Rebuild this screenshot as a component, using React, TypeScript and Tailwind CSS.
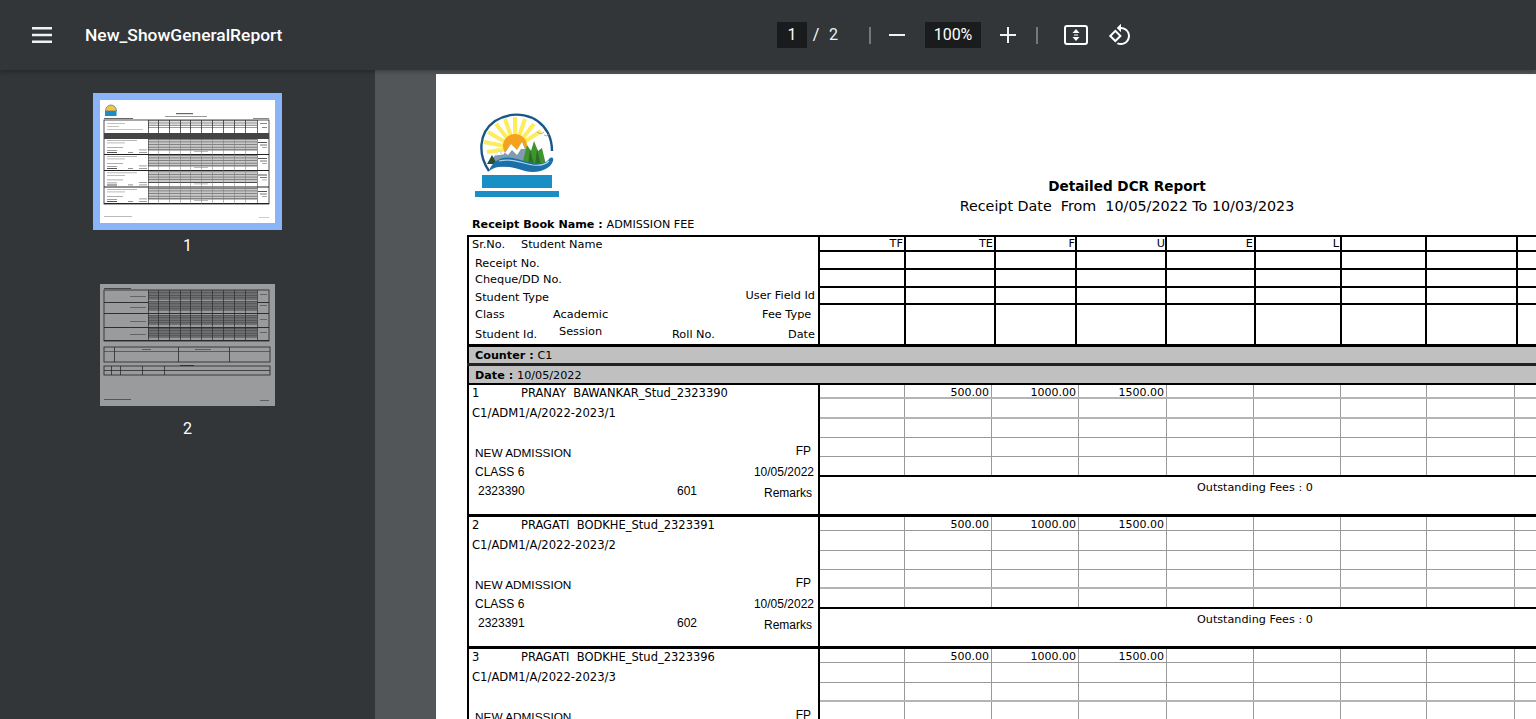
import React from "react";

const headCols = ["w-[86px]", "w-[90px]", "w-[81px]", "w-[90px]", "w-[89px]", "w-[86px]", "w-[85px]", "w-[91px]", "w-[100px]"];
const headLabels = ["TF", "TE", "F", "U", "E", "L", "", "", ""];
const bodyCols = ["w-[85px]", "w-[87px]", "w-[87px]", "w-[88px]", "w-[87px]", "w-[87px]", "w-[86px]", "w-[88px]", "w-[100px]"];

function Rotate() {
  return (
    <svg viewBox="0 0 24 24" className="w-[24px] h-[24px]" fill="#fff">
      <path d="M7.34 6.41L.86 12.9l6.49 6.48 6.49-6.48-6.5-6.49zM3.69 12.9l3.66-3.66L11 12.9l-3.66 3.66-3.65-3.66zm15.67-6.26C17.61 4.88 15.3 4 13 4V.76L8.76 5 13 9.24V6c1.79 0 3.58.68 4.95 2.05 2.73 2.73 2.73 7.17 0 9.9C16.58 19.32 14.79 20 13 20c-.97 0-1.94-.21-2.84-.61l-1.49 1.49C10.02 21.62 11.51 22 13 22c2.3 0 4.61-.88 6.36-2.64 3.52-3.51 3.52-9.21 0-12.72z" />
    </svg>
  );
}

function Fit() {
  return (
    <svg viewBox="0 0 24 20" className="w-[24px] h-[20px]" fill="none">
      <rect x="1" y="1" width="22" height="18" rx="2" stroke="#fff" strokeWidth="2" />
      <path d="M12 4l3.500 4h-7zM12 16l-3.500-4h7z" fill="#fff" />
      <path d="M10 10h4" stroke="#fff" strokeWidth="1" />
    </svg>
  );
}

function Logo() {
  const rays = [
    [40, 4], [30, 6], [50, 6], [21, 11], [59, 11], [13, 19], [66, 18], [9, 29], [12, 39],
  ];
  return (
    <svg viewBox="0 0 84 86" className="w-[84px] h-[86px] block">
      <g stroke="#fdec5c" strokeWidth="4">
        {rays.map(([x, y], i) => (
          <path key={i} d={`M40 35L${x} ${y}`} />
        ))}
      </g>
      <path d="M14 58 C3 42 3 20 20 8 C38 -3 62 0 73 20 C76 26 77 30 77 38" fill="none" stroke="#1a5688" strokeWidth="2.400" />
      <circle cx="40" cy="33" r="12" fill="#f6a21e" />
      <path d="M16 47L24 38L28 42L36 31L42 37L47 29L54 42L62 47L58 54L22 54Z" fill="#7f9bb0" />
      <path d="M30 40L36 31L42 37L47 29L50 36L46 36L42 42L37 37L33 42ZM20 43L24 38L27 42L23 42Z" fill="#fff" />
      <path d="M12 51L17 42L22 51Z" fill="#264f34" />
      <path d="M47 52L52 32L56 38L59 28L63 38L67 35L71 52Z" fill="#3f9430" />
      <path d="M53 52L55 36L59 52ZM60 52L62 36L66 52Z" fill="#2c6e24" />
      <path d="M62 19l4 2 3-2M69 22l3 1 2-2" stroke="#999" strokeWidth="0.8" fill="none" />
      <path d="M14 58C18 46 30 42 42 46C54 50 70 53 74 46C77 43 79 45 78 48C75 57 62 61 50 58C38 54 24 50 14 58Z" fill="#1d6fa8" />
      <path d="M24 48C36 45 46 50 58 52C66 53 70 52 74 48" stroke="#a9d6ea" strokeWidth="1.200" fill="none" />
      <rect x="7" y="62" width="70" height="13" fill="#1a8fc6" />
      <rect x="0" y="78" width="84" height="6" fill="#1a8fc6" />
    </svg>
  );
}

function MiniLines({ x, y, w, h, n }: { x: number; y: number; w: number; h: number; n: number }) {
  return (
    <g>
      {Array.from({ length: n }).map((_, i) => (
        <rect key={i} x={x} y={y + (i * h) / n} width={w} height={0.6} fill="#555" />
      ))}
    </g>
  );
}

const miniX = [148, 158, 169, 180, 190, 201, 212, 223, 234, 245, 257];

function Thumb1() {
  const blocks = [139, 155, 171.500, 188];
  return (
    <svg viewBox="100 100 175 123" className="w-[175px] h-[123px] block blur-[0.5px]">
      <rect x="100" y="100" width="175" height="123" fill="#fff" />
      <path d="M105.500 111a5.500 6 0 0 1 11 0z" fill="#f6c344" stroke="#1f5f92" strokeWidth="0.6" />
      <rect x="105" y="111" width="11.500" height="5" fill="#1a8fc6" />
      <rect x="176" y="113" width="17" height="1.200" fill="#666" />
      <rect x="165" y="116" width="42" height="1" fill="#999" />
      <rect x="104" y="118" width="29" height="1" fill="#666" />
      <rect x="253" y="118" width="16" height="1" fill="#888" />
      <rect x="104" y="120" width="165" height="84" fill="none" stroke="#222" strokeWidth="0.8" />
      <MiniLines x={148} y={120} w={109} h={9} n={5} />
      <rect x="107" y="123" width="18" height="0.7" fill="#aaa" />
      <rect x="107" y="126" width="12" height="0.7" fill="#aaa" />
      <rect x="107" y="129" width="36" height="0.7" fill="#aaa" />
      <rect x="260" y="123" width="7" height="1" fill="#888" />
      <rect x="262" y="127" width="5" height="1" fill="#888" />
      <rect x="104" y="133" width="165" height="6" fill="#444" />
      {blocks.map((y) => (
        <g key={y}>
          <rect x="148" y={y} width="109" height="10.500" fill="#c9c9c9" />
          <MiniLines x={148} y={y} w={109} h={10.500} n={4} />
          <rect x="104" y={y + 15} width="165" height="1" fill="#222" />
          <rect x="148" y={y + 10.500} width="109" height="0.8" fill="#222" />
          <rect x="107" y={y + 1} width="30" height="0.7" fill="#999" />
          <rect x="107" y={y + 3.500} width="18" height="0.8" fill="#aaa" />
          <rect x="107" y={y + 8} width="16" height="0.8" fill="#999" />
          <rect x="107" y={y + 11} width="10" height="0.8" fill="#888" />
          <rect x="107" y={y + 13} width="10" height="1" fill="#555" />
          <rect x="128" y={y + 13} width="5" height="0.8" fill="#777" />
          <rect x="139" y={y + 10.500} width="8" height="0.8" fill="#888" />
          <rect x="139" y={y + 13} width="8" height="0.8" fill="#888" />
          <rect x="258" y={y + 3} width="9" height="1" fill="#555" />
          <rect x="260" y={y + 5.500} width="7" height="1" fill="#777" />
          <rect x="262" y={y + 8} width="5" height="0.8" fill="#999" />
          <rect x="194" y={y + 12} width="14" height="0.8" fill="#aaa" />
        </g>
      ))}
      {miniX.map((x) => (
        <rect key={x} x={x} y="120" width="0.7" height="13" fill="#222" />
      ))}
      {miniX.map((x) => (
        <rect key={x + 1000} x={x} y="139" width="0.5" height="65" fill={x === 148 || x === 257 ? "#222" : "#777"} />
      ))}
      <rect x="104" y="216" width="28" height="1" fill="#bbb" />
      <rect x="259" y="217" width="10" height="1" fill="#ccc" />
    </svg>
  );
}

function Thumb2() {
  return (
    <svg viewBox="100 284 175 122" className="w-[175px] h-[122px] block opacity-50 blur-[0.5px]">
      <rect x="100" y="284" width="175" height="122" fill="#fff" />
      <rect x="104" y="288" width="27" height="1" fill="#555" />
      <rect x="104" y="290" width="165" height="51" fill="none" stroke="#111" strokeWidth="0.8" />
      {[290, 301, 315, 328].map((y) => (
        <g key={y}>
          <rect x="148" y={y} width="109" height="10" fill="#aaa" />
          <MiniLines x={148} y={y} w={109} h={10} n={4} />
          <rect x="104" y={y + 12} width="165" height="0.9" fill="#111" />
          <rect x="130" y={y + 6} width="16" height="0.8" fill="#777" />
          <rect x="260" y={y + 4} width="7" height="0.8" fill="#777" />
        </g>
      ))}
      {miniX.map((x) => (
        <rect key={x} x={x} y="290" width="0.7" height="51" fill="#222" />
      ))}
      <rect x="104" y="347" width="166" height="15" fill="none" stroke="#111" strokeWidth="0.8" />
      <rect x="104" y="351" width="166" height="0.6" fill="#333" />
      <rect x="114" y="347" width="0.8" height="15" fill="#222" />
      <rect x="178" y="347" width="0.8" height="15" fill="#222" />
      <rect x="229" y="347" width="0.8" height="15" fill="#222" />
      <rect x="142" y="349" width="9" height="0.8" fill="#666" />
      <rect x="195" y="349" width="16" height="0.8" fill="#666" />
      <rect x="180" y="365" width="14" height="1" fill="#444" />
      <rect x="104" y="366" width="166" height="9" fill="none" stroke="#111" strokeWidth="0.8" />
      <rect x="104" y="370" width="166" height="0.8" fill="#222" />
      {[111, 120, 142, 164].map((x) => (
        <rect key={x} x={x} y="366" width="0.8" height="9" fill="#222" />
      ))}
      <rect x="104" y="399" width="27" height="1" fill="#777" />
      <rect x="260" y="400" width="9" height="1" fill="#888" />
    </svg>
  );
}

function Student({ no, name, rec, id, roll, thick }: { no: string; name: string; rec: string; id: string; roll: string; thick: number[] }) {
  const line = (r: number) => (thick.includes(r) ? "border-b-2 border-[#b4b4b4]" : "border-b border-[#999]");
  return (
    <div className="flex h-[132px] border-b-[3px] border-black">
      <div className="w-[353px] shrink-0 border-x-2 border-black text-black flex flex-col">
        <div className="h-[16px] pt-[1px] flex items-center font-['DejaVu_Sans',sans-serif] text-[11.5px] whitespace-pre">
          <span className="w-[52px] pl-[3px]">{no}</span>
          <span>{name}</span>
        </div>
        <div className="h-[26px] flex items-center pl-[3px] font-['DejaVu_Sans',sans-serif] text-[11.6px]">{rec}</div>
        <div className="h-[17px]" />
        <div className="h-[19px] flex items-center justify-between pl-[6px] pr-[7px] font-['Liberation_Sans',sans-serif] text-[11.8px]">
          <span>NEW ADMISSION</span>
          <span className="pb-[5px] text-[12px]">FP</span>
        </div>
        <div className="h-[18px] pb-[1px] flex items-center justify-between pl-[6px] pr-[4px] font-['Liberation_Sans',sans-serif] text-[12px]">
          <span>CLASS 6</span>
          <span>10/05/2022</span>
        </div>
        <div className="h-[20px] flex items-center font-['Liberation_Sans',sans-serif] text-[12px]">
          <span className="w-[208px] pl-[9px]">{id}</span>
          <span className="w-[70px]">{roll}</span>
          <span className="pt-[4px] pl-[17px]">Remarks</span>
        </div>
      </div>
      <div className="flex-1 flex flex-col">
        <div className={`flex h-[14px] ${line(0)}`}>
          {bodyCols.map((w, i) => (
            <div key={i} className={`${w} shrink-0 h-full border-r border-[#999] pr-[2px] text-right font-['DejaVu_Sans',sans-serif] text-[11px] leading-[16px] text-black`}>
              {i === 1 ? "500.00" : i === 2 ? "1000.00" : i === 3 ? "1500.00" : ""}
            </div>
          ))}
        </div>
        {["h-[20px]", "h-[19px]", "h-[19px]"].map((h, r) => (
          <div key={r} className={`flex ${h} ${line(r + 1)}`}>
            {bodyCols.map((w, i) => (
              <div key={i} className={`${w} shrink-0 h-full border-r border-[#999]`} />
            ))}
          </div>
        ))}
        <div className="flex h-[18px]">
          {bodyCols.map((w, i) => (
            <div key={i} className={`${w} shrink-0 h-full border-r border-[#999]`} />
          ))}
        </div>
        <div className="flex-1 border-t-2 border-black pl-[377px] pt-[3px] font-['DejaVu_Sans',sans-serif] text-[11.2px] leading-[16px] text-black whitespace-pre">
          Outstanding Fees : 0
        </div>
      </div>
    </div>
  );
}

export default function App() {
  return (
    <div className="w-[1536px] h-[719px] overflow-hidden flex flex-col bg-[#323639] font-['Roboto',sans-serif]">
      <header className="h-[70px] shrink-0 bg-[#323639] shadow-[0_2px_4px_rgba(0,0,0,0.25)] z-10 flex items-center text-white">
        <svg viewBox="0 0 20 16" className="ml-[32px] w-[20px] h-[16px]" fill="#f1f1f1">
          <rect y="0" width="20" height="2.500" />
          <rect y="6.750" width="20" height="2.500" />
          <rect y="13.500" width="20" height="2.500" />
        </svg>
        <span className="ml-[33px] w-[692px] pt-[1px] text-[17.4px] font-medium leading-none text-white">New_ShowGeneralReport</span>
        <div className="w-[30px] h-[26px] bg-[#191b1c] flex items-center justify-center text-[16px]">1</div>
        <span className="w-[16px] text-center text-[16px] pl-[2px]">/</span>
        <span className="w-[10px] ml-[6px] text-[16px] text-[#f1f1f1]">2</span>
        <div className="ml-[30px] w-[2px] h-[17px] bg-[#74787a]" />
        <svg viewBox="0 0 16 16" className="ml-[18px] w-[16px] h-[16px]" fill="#f1f1f1"><rect y="7" width="16" height="2" /></svg>
        <div className="ml-[20px] w-[56px] h-[26px] bg-[#191b1c] flex items-center justify-center text-[16px]">100%</div>
        <svg viewBox="0 0 16 16" className="ml-[19px] w-[16px] h-[16px]" fill="#f1f1f1"><path d="M7 0h2v7h7v2H9v7H7V9H0V7h7z" /></svg>
        <div className="ml-[20px] w-[2px] h-[17px] bg-[#74787a]" />
        <div className="ml-[26px]"><Fit /></div>
        <div className="ml-[20px]"><Rotate /></div>
      </header>
      <div className="flex-1 flex min-h-0">
        <aside className="w-[375px] shrink-0 bg-[#323639] flex flex-col items-center text-white">
          <div className="mt-[23px] border-[7px] border-[#8ab4f8]"><Thumb1 /></div>
          <div className="mt-[7px] h-[18px] text-[16px] leading-[18px] text-center">1</div>
          <div className="mt-[29px]"><Thumb2 /></div>
          <div className="mt-[14px] h-[18px] text-[16px] leading-[18px] text-center">2</div>
        </aside>
        <main className="flex-1 min-w-0 bg-[#525659] overflow-hidden pl-[61px] pt-[4px]">
          <div className="w-[1200px] h-[800px] bg-white pl-[31px] text-black">
            <div className="h-[141px] flex">
              <div className="ml-[8px] pt-[39px]"><Logo /></div>
              <div className="ml-[368px] w-[400px] pt-[103px] text-center font-['DejaVu_Sans',sans-serif] whitespace-pre">
                <div className="text-[13.6px] leading-[18px] font-bold">Detailed DCR Report</div>
                <div className="text-[14.3px] leading-[22px]">Receipt Date  From  10/05/2022 To 10/03/2023</div>
              </div>
            </div>
            <div className="h-[20px] pl-[5px] pt-[1px] font-['DejaVu_Sans',sans-serif] text-[11.15px] leading-[18px]">
              <b>Receipt Book Name : </b>ADMISSION FEE
            </div>
            <div className="border-t-2 border-black flex h-[112px] border-b-[3px] font-['DejaVu_Sans',sans-serif] text-[11.3px] text-black">
              <div className="w-[353px] shrink-0 border-x-2 border-black flex flex-col">
                <div className="h-[16px] pt-[1px] flex items-center whitespace-pre">
                  <span className="w-[52px] pl-[3px]">Sr.No.</span>
                  <span>Student Name</span>
                </div>
                <div className="h-[19px] flex items-center pl-[6px] pt-[3px]">Receipt No.</div>
                <div className="h-[16px] flex items-center pl-[6px]">Cheque/DD No.</div>
                <div className="h-[18px] flex items-center justify-between pl-[6px] pr-[3px]">
                  <span className="pt-[3px]">Student Type</span>
                  <span className="pb-[2px]">User Field Id</span>
                </div>
                <div className="h-[18px] flex items-center pl-[6px]">
                  <span className="w-[78px]">Class</span>
                  <span className="w-[209px]">Academic</span>
                  <span>Fee Type</span>
                </div>
                <div className="h-[19px] flex items-center pl-[6px] pr-[3px]">
                  <span className="w-[84px] pt-[3px]">Student Id.</span>
                  <span className="w-[113px] pb-[3px]">Session</span>
                  <span className="w-[87px] pt-[3px]">Roll No.</span>
                  <span className="flex-1 text-right pt-[3px]">Date</span>
                </div>
              </div>
              <div className="flex-1 flex flex-col">
                {["h-[15px]", "h-[18px]", "h-[18px]", "h-[17px]", "flex-1"].map((h, r) => (
                  <div key={r} className={`flex ${h} ${r < 4 ? "border-b-2 border-black" : ""}`}>
                    {headCols.map((w, i) => (
                      <div key={i} className={`${w} shrink-0 h-full border-r-2 border-black ${i === 2 || i === 3 ? "pr-0" : "pr-[1px]"} text-right leading-[14px]`}>
                        {r === 0 ? headLabels[i] : ""}
                      </div>
                    ))}
                  </div>
                ))}
              </div>
            </div>
            <div className="h-[16px] bg-[#c0c0c0] border-x-2 border-black pl-[6px] font-['DejaVu_Sans',sans-serif] text-[11.2px] leading-[18px]">
              <b>Counter : </b>C1
            </div>
            <div className="h-[3px] bg-[#222]" />
            <div className="h-[17px] bg-[#c0c0c0] border-x-2 border-black pl-[6px] font-['DejaVu_Sans',sans-serif] text-[11.2px] leading-[20px]">
              <b>Date : </b>10/05/2022
            </div>
            <div className="h-[2px] bg-black" />
            <Student no="1" name="PRANAY  BAWANKAR_Stud_2323390" rec="C1/ADM1/A/2022-2023/1" id="2323390" roll="601" thick={[0, 1]} />
            <Student no="2" name="PRAGATI  BODKHE_Stud_2323391" rec="C1/ADM1/A/2022-2023/2" id="2323391" roll="602" thick={[3]} />
            <Student no="3" name="PRAGATI  BODKHE_Stud_2323396" rec="C1/ADM1/A/2022-2023/3" id="2323396" roll="603" thick={[2]} />
          </div>
        </main>
      </div>
    </div>
  );
}
